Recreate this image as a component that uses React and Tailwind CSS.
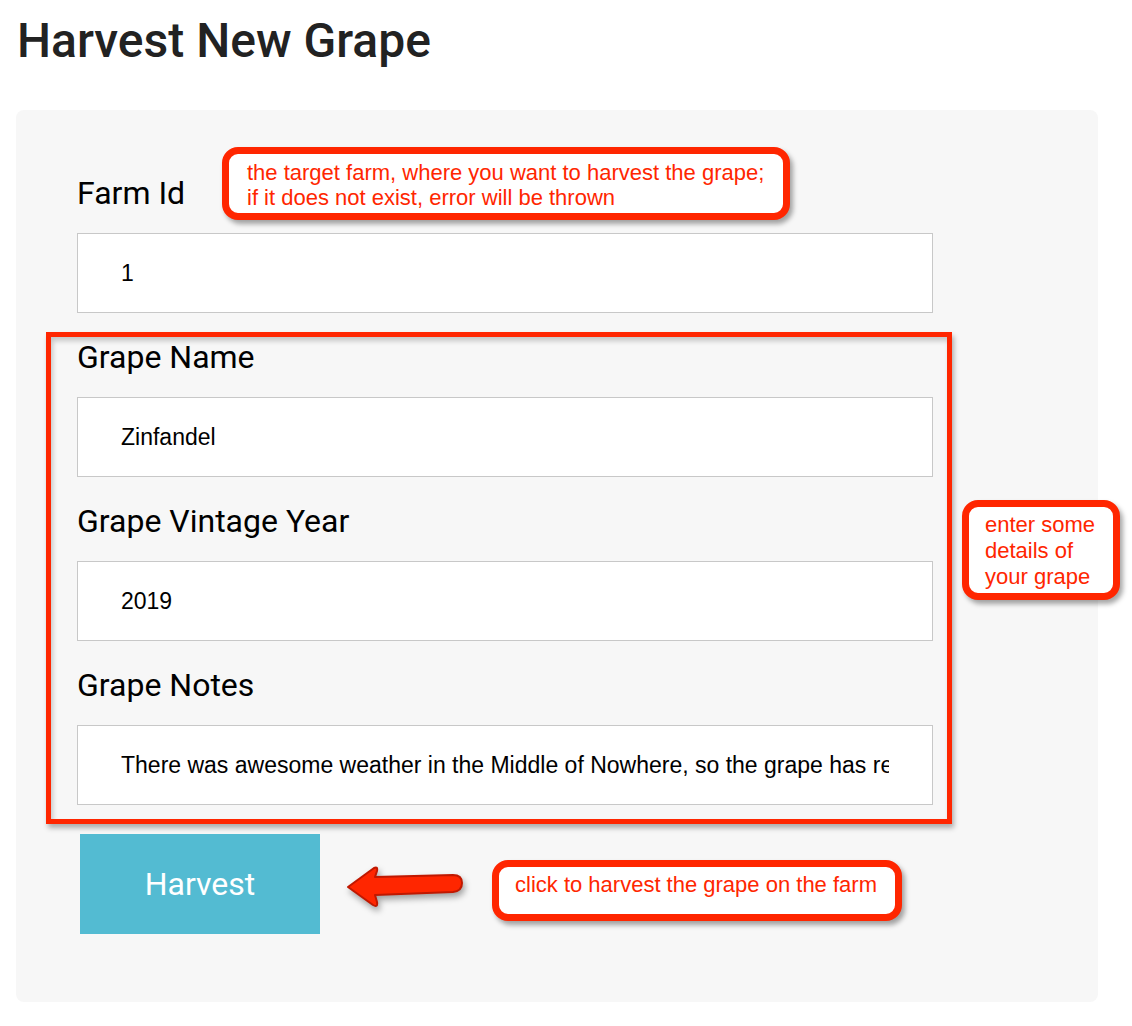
import { useState } from 'react';

const fields = [
  { label: 'Farm Id', value: '1' },
  { label: 'Grape Name', value: 'Zinfandel' },
  { label: 'Grape Vintage Year', value: '2019' },
  { label: 'Grape Notes', value: 'There was awesome weather in the Middle of Nowhere, so the grape has really good taste' },
];

const Callout = ({ className, children }) => (
  <div className={`absolute rounded-[16px] border-[7px] border-[#ff2600] bg-white font-['Liberation_Sans',Arial,sans-serif] text-[22px] leading-[25px] text-[#ff2600] shadow-[3px_4px_5px_rgba(0,0,0,0.35)] ${className}`}>
    {children}
  </div>
);

const App = () => {
  const [values, setValues] = useState(fields.map(f => f.value));

  return (
    <div className="relative min-h-[1026px] bg-white font-['Roboto',sans-serif]">
      <h1 className="px-[17px] pt-[8px] pb-[37px] text-[48px] font-medium leading-[65px] text-[#222]">Harvest New Grape</h1>

      <div className="mx-[16px] w-[1082px] rounded-[8px] bg-[#f7f7f7] pl-[61px] pt-[65px] pb-[68px]">
        <div className="flex flex-col gap-[26px]">
          {fields.map((f, i) => (
            <div key={f.label} className="flex flex-col gap-[22px]">
              <label className="block h-[36px] text-[32px] leading-[36px] text-black">{f.label}</label>
              <input
                value={values[i]}
                onChange={e => setValues(values.map((v, j) => (j === i ? e.target.value : v)))}
                className="block h-[80px] w-[856px] border border-[#c8c8c8] bg-white px-[43px] font-['Liberation_Sans',Arial,sans-serif] text-[23px] text-black outline-none"
              />
            </div>
          ))}
        </div>
        <button className="ml-[3px] mt-[29px] block h-[100px] w-[240px] bg-[#53bbd2] text-[32px] text-white">Harvest</button>
      </div>

      {/* annotations */}
      <div className="pointer-events-none absolute left-[46px] top-[332px] h-[492px] w-[906px] border-[5px] border-[#ff2600] shadow-[2px_4px_5px_rgba(0,0,0,0.3),inset_2px_4px_5px_rgba(0,0,0,0.2)]" />

      <Callout className="left-[222px] top-[147px] h-[73px] w-[568px] pl-[18px] pt-[6px]">
        the target farm, where you want to harvest the grape;<br />if it does not exist, error will be thrown
      </Callout>

      <Callout className="left-[962px] top-[500px] h-[100px] w-[158px] pl-[16px] pt-[5px] leading-[26px]">
        enter some<br />details of<br />your grape
      </Callout>

      <Callout className="left-[492px] top-[860px] h-[61px] w-[410px] pl-[16px] pt-[5px]">
        click to harvest the grape on the farm
      </Callout>

      <svg className="absolute left-[343px] top-[862px] drop-shadow-[2px_4px_3px_rgba(0,0,0,0.35)]" width="124" height="50" viewBox="0 0 124 50">
        <path
          d="M5 25 L31 6 Q35 4 34 9 L32 15 L110 13 Q119 13 119 21 Q119 29 110 30 L32 33 L34 40 Q35 46 30 43 Z"
          fill="#ff2600"
          stroke="#c01800"
          strokeWidth="2"
          strokeLinejoin="round"
        />
      </svg>
    </div>
  );
};

export default App;
